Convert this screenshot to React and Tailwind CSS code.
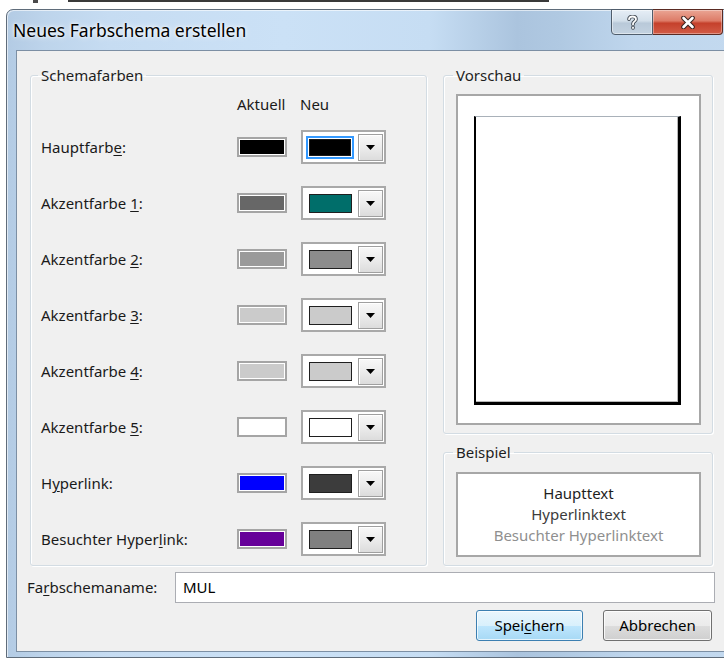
import React from 'react';

const rows = [
  { pre: 'Hauptfarb', key: 'e', post: ':', cur: '#000000', neu: '#000000', focus: true },
  { pre: 'Akzentfarbe ', key: '1', post: ':', cur: '#676767', neu: '#006e6a' },
  { pre: 'Akzentfarbe ', key: '2', post: ':', cur: '#9a9a9a', neu: '#8c8c8c' },
  { pre: 'Akzentfarbe ', key: '3', post: ':', cur: '#cbcbcb', neu: '#cbcbcb' },
  { pre: 'Akzentfarbe ', key: '4', post: ':', cur: '#cbcbcb', neu: '#cbcbcb' },
  { pre: 'Akzentfarbe ', key: '5', post: ':', cur: '#ffffff', neu: '#ffffff' },
  { pre: 'H', key: 'y', post: 'perlink:', cur: '#0000ff', neu: '#3c3c3c' },
  { pre: 'Besuchter Hyper', key: 'l', post: 'ink:', cur: '#660099', neu: '#808080' },
];

function CurrentSwatch({ color }) {
  return (
    <div className="w-[50px] h-[20px] border-2 border-[#a5a5a5] p-px bg-white shrink-0">
      <div className="w-full h-full" style={{ backgroundColor: color }} />
    </div>
  );
}

function ColorPicker({ color, focus }) {
  return (
    <div className="w-[85px] h-[34px] border-2 border-[#a9a9a9] bg-white flex items-center shrink-0">
      {focus ? (
        <div className="ml-[3px] w-[48px] h-[23px] border-2 border-[#3399ff] p-px bg-white">
          <div className="w-full h-full border border-[#1a1a1a]" style={{ backgroundColor: color }} />
        </div>
      ) : (
        <div className="ml-[6px] w-[43px] h-[19px] border border-[#1f1f1f]" style={{ backgroundColor: color }} />
      )}
      <div className="ml-auto mr-[1px] w-[25px] h-[27px] border border-[#9f9f9f] bg-[linear-gradient(#f8f8f8,#ececec_50%,#dcdcdc)] shadow-[inset_1px_1px_0_#ffffff] flex items-center justify-center">
        <svg width="9" height="5" viewBox="0 0 9 5">
          <path d="M0 0H9L4.5 5Z" fill="#000" />
        </svg>
      </div>
    </div>
  );
}

function Group({ title, className, children }) {
  return (
    <fieldset className={`border border-[#d3dce3] rounded-[3px] shadow-[inset_1px_1px_0_#ffffff,1px_1px_0_#ffffff] ${className}`}>
      <legend className="-ml-[3px] px-[3px] leading-[20px] text-[15px] text-[#1e1e1e]">{title}</legend>
      {children}
    </fieldset>
  );
}

export default function App() {
  return (
    <div className="w-[724px] h-[659px] overflow-hidden bg-white font-['Noto_Sans',sans-serif] text-[15px] text-[#1a1a1a]">
      {/* strip above the window */}
      <div className="flex h-[9px] items-start">
        <span className="ml-[33px] w-[5px] h-[3px] bg-[#4a4a4a]" />
        <span className="ml-[30px] w-[481px] h-[2px] bg-[#3a3a3a]" />
      </div>

      {/* dialog window */}
      <div className="ml-[6px] w-[731px] h-[649px] flex flex-col border border-[#5f6c7a] rounded-t-[7px] bg-[linear-gradient(90deg,#b3cbe4_0%,#bdd4eb_5%,#c6dcf2_14%,#cbe1f6_38%,#c6ddf3_58%,#abc4de_70%,#b0c9e2_76%,#bfd6ed_86%,#c3d9ef_100%)] shadow-[inset_1px_1px_0_rgba(255,255,255,0.6)]">
        {/* title bar */}
        <div className="h-[40px] shrink-0 flex items-start">
          <div className="pl-[6px] pt-[8px] text-[17.5px] leading-[24px] text-black [text-shadow:0_0_6px_#ffffff,0_0_3px_#ffffff]">
            Neues Farbschema erstellen
          </div>
          <div className="ml-auto mr-[13px] -mt-px flex">
            <div className="w-[42px] h-[26px] border border-[#4f5d6c] rounded-bl-[4px] bg-[linear-gradient(#e6eef6,#d3dfea_45%,#b9c9d9_55%,#c3d2e0)] shadow-[inset_0_0_0_1px_rgba(255,255,255,0.45)] flex items-center justify-center">
              <svg width="11" height="15" viewBox="0 0 11 15">
                <path d="M2 4.2C2 2.4 3.4 1.5 5.5 1.5C7.6 1.5 9 2.5 9 4.2C9 6.3 6 6.5 6 8.8V9.5M6 12.3V13" fill="none" stroke="#3e4650" strokeWidth="3.6" strokeLinecap="round" />
                <path d="M2 4.2C2 2.4 3.4 1.5 5.5 1.5C7.6 1.5 9 2.5 9 4.2C9 6.3 6 6.5 6 8.8V9.5M6 12.3V13" fill="none" stroke="#ffffff" strokeWidth="1.8" strokeLinecap="round" />
              </svg>
            </div>
            <div className="w-[70px] h-[26px] border border-l-0 border-[#5a2a22] rounded-br-[4px] bg-[linear-gradient(#eaa594,#dd7b67_45%,#c5402b_55%,#d25c46)] shadow-[inset_0_0_0_1px_rgba(255,255,255,0.35)] flex items-center justify-center">
              <svg width="14" height="13" viewBox="0 0 14 13">
                <path d="M2.5 2L11.5 11M11.5 2L2.5 11" stroke="#3b2420" strokeWidth="4.6" strokeLinecap="round" />
                <path d="M2.5 2L11.5 11M11.5 2L2.5 11" stroke="#ffffff" strokeWidth="2.6" strokeLinecap="round" />
              </svg>
            </div>
          </div>
        </div>

        {/* client area */}
        <div className="flex-1 min-h-0 flex pl-[9px] pr-[9px] pb-[5px]">
          <div className="flex-1 border border-[#7c8fa4] bg-[#f0f0f0] flex flex-col pt-[14px]">
            <div className="flex pl-[13px] gap-[16px]">
              {/* Schemafarben */}
              <Group title="Schemafarben" className="w-[397px] pl-[10px] pt-[9px] pb-[9px]">
                <div className="flex h-[20px] items-center leading-[20px]">
                  <div className="w-[196px]" />
                  <div className="w-[63px]">Aktuell</div>
                  <div>Neu</div>
                </div>
                <div className="mt-[16px] flex flex-col gap-[22px]">
                  {rows.map((r, i) => (
                    <div key={i} className="h-[34px] flex items-center">
                      <div className="w-[196px]">
                        {r.pre}
                        <u className="underline-offset-2">{r.key}</u>
                        {r.post}
                      </div>
                      <CurrentSwatch color={r.cur} />
                      <div className="w-[14px]" />
                      <ColorPicker color={r.neu} focus={r.focus} />
                    </div>
                  ))}
                </div>
              </Group>

              {/* right column */}
              <div className="w-[270px] flex flex-col">
                <Group title="Vorschau" className="pl-[12px] pr-[11px] pt-[9px] pb-[8px]">
                  <div className="h-[331px] border-2 border-[#a7a7a7] bg-white flex pt-[20px] pl-[16px] pr-[18px] pb-[18px]">
                    <div className="flex-1 bg-white border-t border-t-[#a9b1b9] border-l-2 border-l-black border-r-[3px] border-r-black border-b-[3px] border-b-black shadow-[inset_-1px_-1px_0_#b8b8b8]" />
                  </div>
                </Group>
                <Group title="Beispiel" className="mt-[8px] pl-[12px] pr-[11px] pt-[10px] pb-[8px]">
                  <div className="h-[85px] border-2 border-[#a7a7a7] bg-white flex flex-col items-center justify-center leading-[21px]">
                    <div className="text-[#1e1e1e]">Haupttext</div>
                    <div className="text-[#3c3c3c]">Hyperlinktext</div>
                    <div className="text-[#8f8f8f]">Besuchter Hyperlinktext</div>
                  </div>
                </Group>
              </div>
            </div>

            {/* name row */}
            <div className="mt-[6px] flex items-center pl-[10px] pr-[11px]">
              <div className="w-[148px]">
                Fa<u className="underline-offset-2">r</u>bschemaname:
              </div>
              <div className="flex-1 h-[31px] border border-[#abadb3] bg-white flex items-center pl-[7px] text-black">
                MUL
              </div>
            </div>

            {/* buttons */}
            <div className="mt-[7px] flex justify-end gap-[20px] pr-[14px]">
              <div className="w-[107px] h-[31px] rounded-[3px] border border-[#3c7fb1] bg-[linear-gradient(#eaf6fd,#d9f0fc_50%,#bee6fd_51%,#a7d9f5)] shadow-[inset_0_0_0_1px_rgba(255,255,255,0.7)] flex items-center justify-center text-black">
                Spei<u className="underline-offset-2">c</u>hern
              </div>
              <div className="w-[109px] h-[31px] rounded-[3px] border border-[#707070] bg-[linear-gradient(#f2f2f2,#ebebeb_50%,#dddddd_51%,#cfcfcf)] shadow-[inset_0_0_0_1px_rgba(255,255,255,0.8)] flex items-center justify-center text-black">
                Abbrechen
              </div>
            </div>
          </div>
        </div>
      </div>
    </div>
  );
}
